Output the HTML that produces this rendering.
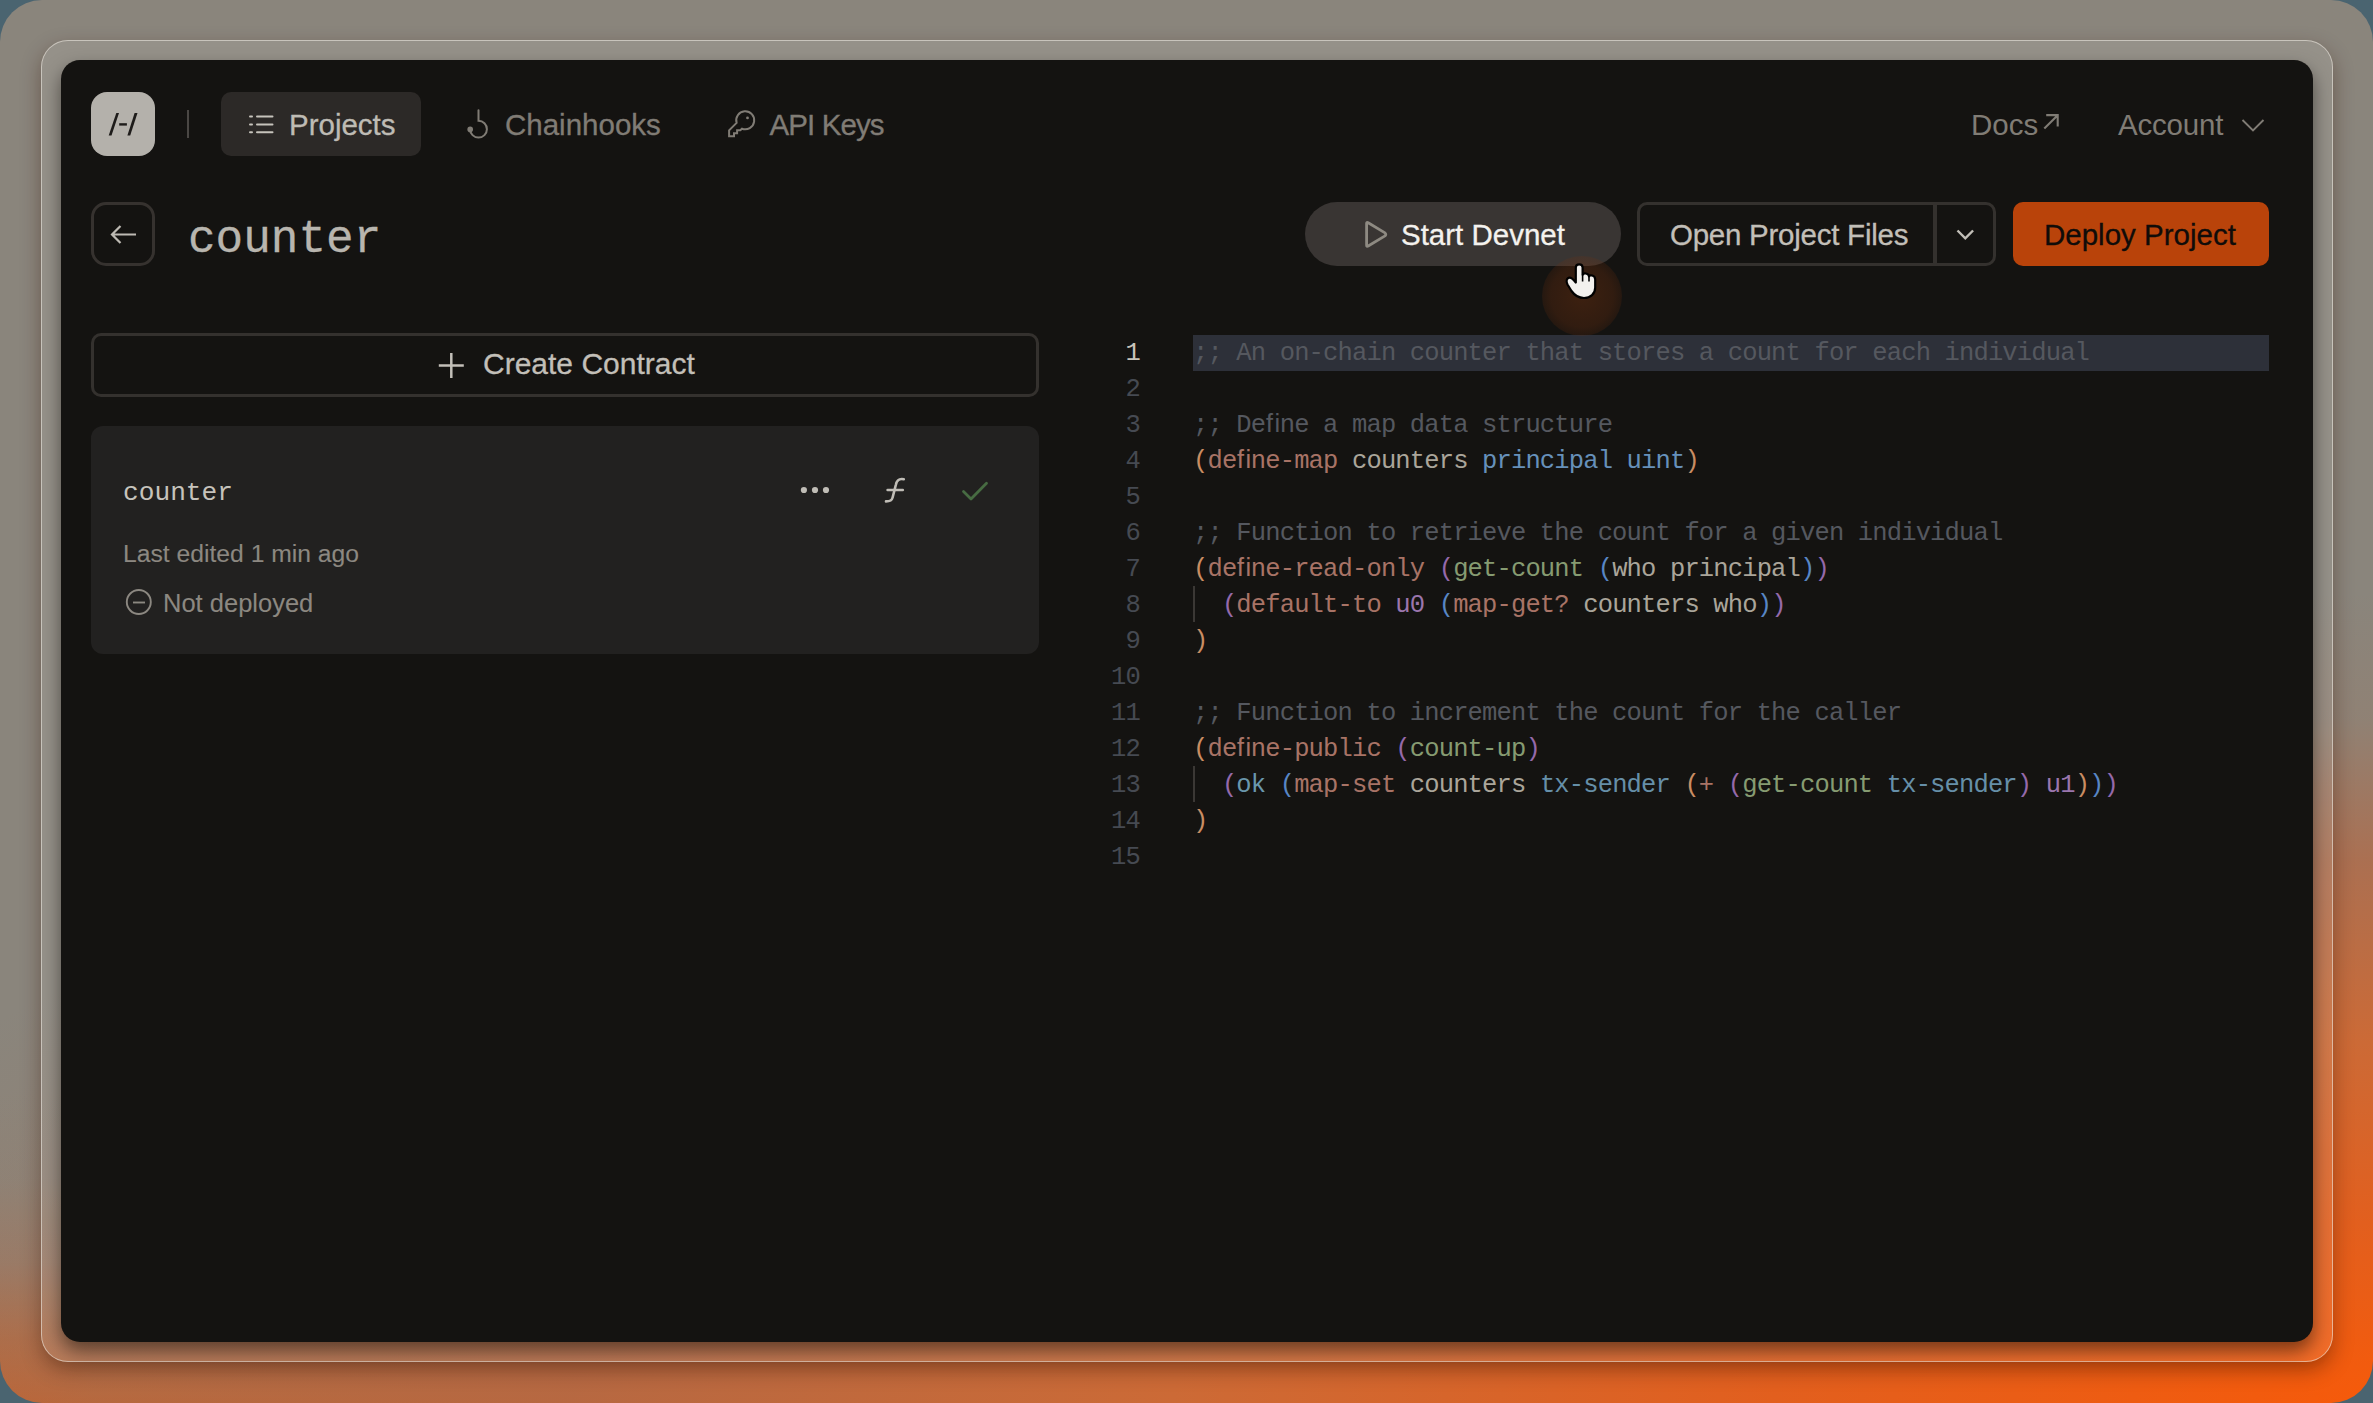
<!DOCTYPE html>
<html><head><meta charset="utf-8">
<style>
*{margin:0;padding:0;box-sizing:border-box}
html,body{width:2373px;height:1403px;overflow:hidden;background:#4a6470}
body{position:relative;font-family:"Liberation Sans",sans-serif}
.a{position:absolute}
#bg{left:0;top:0;width:2373px;height:1403px;border-radius:42px;
 background:radial-gradient(ellipse 3000px 900px at 2373px 1403px, #f65a0a 0%, #e25f1e 20%, #cc6a36 40%, rgba(180,106,70,0.8) 60%, rgba(155,122,100,0.32) 76%, rgba(138,133,124,0) 90%),
 linear-gradient(to top, rgba(196,96,44,1) 0%, rgba(184,102,58,0.88) 4.5%, rgba(168,112,82,0.5) 10%, rgba(150,124,105,0.18) 16%, rgba(138,133,124,0) 22%), #8a857c;}
#frame{left:41px;top:40px;width:2292px;height:1322px;border-radius:27px;border:1.6px solid rgba(232,228,220,0.62);
 background:rgba(255,255,255,0.10);box-shadow:0 8px 20px rgba(50,15,0,0.38)}
#app{left:61px;top:60px;width:2252px;height:1282px;border-radius:19px;background:#141311;overflow:hidden;box-shadow:0 9px 18px rgba(10,5,0,0.5)}
.t{position:absolute;white-space:nowrap;line-height:1;-webkit-text-stroke:0.3px currentColor}

.cl{position:absolute;left:0;height:36px;line-height:36px;white-space:pre;font-family:'Liberation Mono',monospace;font-size:25.5px;letter-spacing:-0.85px;color:#bdb8ad}
.ln{position:absolute;right:-101px;width:100px;text-align:right;height:36px;line-height:36px;white-space:pre;font-family:'Liberation Mono',monospace;font-size:25.5px;letter-spacing:-0.85px;color:#464a52}
#lnums{width:0}
.ln.act{color:#c8c4ba}
.c{color:#55585f}.p0{color:#c98d63}.kw{color:#a87366}.id{color:#aaa59a}.ty{color:#6690ba}.fn{color:#869b71}.p1{color:#9569aa}.p2{color:#5886c4}.nm{color:#9b76ad}.ok{color:#6a97ad}.tx{color:#668fa8}
</style></head>
<body>
<div id="bg" class="a"></div>
<div id="frame" class="a"></div>
<div id="app" class="a"></div>

<div id="ui">
<!-- nav -->
<div class="a" style="left:91px;top:92px;width:64px;height:64px;border-radius:16px;background:#b4b1ab"></div>
<div class="a" style="left:187px;top:110px;width:2px;height:28px;background:#4a4744"></div>
<div class="a" style="left:221px;top:92px;width:200px;height:64px;border-radius:10px;background:#2c2927"></div>
<div class="t" id="t_projects" style="left:289px;top:109.5px;font-size:29.5px;color:#bebbb4">Projects</div>
<div class="t" id="t_chain" style="left:505px;top:109.5px;font-size:29.5px;color:#807c75">Chainhooks</div>
<div class="t" id="t_api" style="letter-spacing:-0.9px;left:769.5px;top:109.5px;font-size:29.5px;color:#807c75">API Keys</div>
<div class="t" id="t_docs" style="-webkit-text-stroke:0;left:1971px;top:109.5px;font-size:29.5px;color:#807c75">Docs</div>
<div class="t" id="t_account" style="-webkit-text-stroke:0;letter-spacing:-0.2px;left:2118px;top:109.5px;font-size:29.5px;color:#807c75">Account</div>

<!-- header -->
<div class="a" style="left:91px;top:202px;width:64px;height:64px;border-radius:15px;border:3.5px solid #36322f"></div>
<div class="t" id="t_title" style="-webkit-text-stroke:0.3px currentColor;left:188px;top:217px;font-size:46px;font-family:'Liberation Mono',monospace;color:#b8b5ae">counter</div>

<div class="a" style="left:1305px;top:202px;width:316px;height:64px;border-radius:32px;background:#393533"></div>
<div class="t" id="t_start" style="left:1401px;top:219.5px;font-size:29.5px;color:#f4f2ee">Start Devnet</div>
<div class="a" style="left:1637px;top:202px;width:359px;height:64px;border-radius:10px;border:3.5px solid #34312e"></div>
<div class="a" style="left:1933px;top:205px;width:3.5px;height:58px;background:#34312e"></div>
<div class="t" id="t_open" style="letter-spacing:-0.25px;left:1670px;top:219.5px;font-size:29.5px;color:#c2bfb8">Open Project Files</div>
<div class="a" style="left:2013px;top:202px;width:256px;height:64px;border-radius:10px;background:#b9430a"></div>
<div class="t" id="t_deploy" style="left:2044px;top:219.5px;font-size:29.5px;color:#100c09">Deploy Project</div>

<!-- left panel -->
<div class="a" style="left:91px;top:333px;width:948px;height:64px;border-radius:10px;border:3px solid #34312e"></div>
<div class="t" id="t_create" style="left:483px;top:348.5px;font-size:30px;color:#c2bfb8">Create Contract</div>
<div class="a" style="left:91px;top:426px;width:948px;height:228px;border-radius:12px;background:#222120"></div>
<div class="t" id="t_card" style="-webkit-text-stroke:0;left:123px;top:479.5px;font-size:26.2px;font-family:'Liberation Mono',monospace;color:#c6c3bc">counter</div>
<div class="t" id="t_last" style="-webkit-text-stroke:0.1px currentColor;left:123px;top:541.5px;font-size:24.7px;color:#8c8881">Last edited 1 min ago</div>
<div class="t" id="t_notdep" style="-webkit-text-stroke:0.1px currentColor;left:163px;top:591px;font-size:25.5px;color:#8c8881">Not deployed</div>

<!-- code -->
<div class="a" style="left:1193px;top:335px;width:1076px;height:36px;background:#2d3039"></div>
<div class="a" style="left:1193px;top:586px;width:2px;height:36px;background:#3b3835"></div>
<div class="a" style="left:1193px;top:766px;width:2px;height:36px;background:#3b3835"></div>
<div id="code" class="a" style="left:1193px;top:336px"><div class="cl" style="top:0px"><span class="c">;; An on-chain counter that stores a count for each individual</span></div><div class="cl" style="top:36px"></div><div class="cl" style="top:72px"><span class="c">;; Deﬁne a map data structure</span></div><div class="cl" style="top:108px"><span class="p0">(</span><span class="kw">deﬁne-map</span> <span class="id">counters</span> <span class="ty">principal</span> <span class="ty">uint</span><span class="p0">)</span></div><div class="cl" style="top:144px"></div><div class="cl" style="top:180px"><span class="c">;; Function to retrieve the count for a given individual</span></div><div class="cl" style="top:216px"><span class="p0">(</span><span class="kw">deﬁne-read-only</span> <span class="p1">(</span><span class="fn">get-count</span> <span class="p2">(</span><span class="id">who principal</span><span class="p2">)</span><span class="p1">)</span></div><div class="cl" style="top:252px">  <span class="p1">(</span><span class="kw">default-to</span> <span class="nm">u0</span> <span class="p2">(</span><span class="kw">map-get?</span> <span class="id">counters who</span><span class="p2">)</span><span class="p1">)</span></div><div class="cl" style="top:288px"><span class="p0">)</span></div><div class="cl" style="top:324px"></div><div class="cl" style="top:360px"><span class="c">;; Function to increment the count for the caller</span></div><div class="cl" style="top:396px"><span class="p0">(</span><span class="kw">deﬁne-public</span> <span class="p1">(</span><span class="fn">count-up</span><span class="p1">)</span></div><div class="cl" style="top:432px">  <span class="p1">(</span><span class="ok">ok</span> <span class="p2">(</span><span class="kw">map-set</span> <span class="id">counters</span> <span class="tx">tx-sender</span> <span class="p0">(</span><span class="kw">+</span> <span class="p1">(</span><span class="fn">get-count</span> <span class="tx">tx-sender</span><span class="p1">)</span> <span class="nm">u1</span><span class="p0">)</span><span class="p2">)</span><span class="p1">)</span></div><div class="cl" style="top:468px"><span class="p0">)</span></div><div class="cl" style="top:504px"></div></div>
<div id="lnums" class="a" style="left:1039px;top:336px"><div class="ln act" style="top:0px">1</div><div class="ln" style="top:36px">2</div><div class="ln" style="top:72px">3</div><div class="ln" style="top:108px">4</div><div class="ln" style="top:144px">5</div><div class="ln" style="top:180px">6</div><div class="ln" style="top:216px">7</div><div class="ln" style="top:252px">8</div><div class="ln" style="top:288px">9</div><div class="ln" style="top:324px">10</div><div class="ln" style="top:360px">11</div><div class="ln" style="top:396px">12</div><div class="ln" style="top:432px">13</div><div class="ln" style="top:468px">14</div><div class="ln" style="top:504px">15</div></div>

<svg class="a" style="left:0;top:0" width="2373" height="1403" viewBox="0 0 2373 1403" fill="none">
 <!-- logo glyph -->
 <g fill="#1e1c1a">
  <polygon points="116.3,113 119,113 111.5,135.5 108.7,135.5"/>
  <rect x="119.2" y="123.2" width="7.7" height="2.4"/>
  <polygon points="134.6,113 137.5,113 130.2,135.5 127.4,135.5"/>
 </g>
 <!-- list icon -->
 <g stroke="#c6c3bc" stroke-width="2" stroke-linecap="round">
  <line x1="250" y1="116.5" x2="252" y2="116.5"/><line x1="257" y1="116.5" x2="272.5" y2="116.5"/>
  <line x1="250" y1="124.4" x2="252" y2="124.4"/><line x1="257" y1="124.4" x2="272.5" y2="124.4"/>
  <line x1="250" y1="132.3" x2="252" y2="132.3"/><line x1="257" y1="132.3" x2="272.5" y2="132.3"/>
 </g>
 <!-- chainhooks icon -->
 <g stroke="#807c75" stroke-width="2" stroke-linecap="round" fill="none">
  <path d="M478.5 110.3 V120.8 A8.4 8.4 0 1 1 470.1 129.2"/>
 </g>
 <circle cx="470.2" cy="129.4" r="2.8" fill="#807c75"/>
 <!-- key icon -->
 <g stroke="#807c75" stroke-width="2" stroke-linejoin="miter" fill="none">
  <path d="M736.6 122.9 L729.1 130.4 V136.3 H734 V133.2 H737.1 V130.3 H740.3 L742 128.7 A9 9 0 1 0 736.6 122.9 Z"/>
 </g>
 <circle cx="747.5" cy="117.9" r="1.4" fill="#807c75"/>
 <!-- docs arrow -->
 <g stroke="#807c75" stroke-width="2.1" stroke-linecap="butt" fill="none">
  <path d="M2044.3 128.6 L2057.2 115.7 M2046.2 115.1 H2057.7 V126.6"/>
 </g>
 <!-- account chevron -->
 <path d="M2242.5 120 L2253 130.5 L2263.5 120" stroke="#807c75" stroke-width="1.9" fill="none"/>
 <!-- back arrow -->
 <g stroke="#bdbab3" stroke-width="2.2" fill="none">
  <path d="M136 234.5 H112 M120.5 226 L112 234.5 L120.5 243"/>
 </g>
 <!-- play icon -->
 <path d="M1366.6 223.6 Q1366.6 221.9 1368.2 222.8 L1385 232.9 Q1386.6 234.4 1385 235.9 L1368.2 246 Q1366.6 246.9 1366.6 245.2 Z" stroke="#8e8a82" stroke-width="2.8" stroke-linejoin="round" fill="none"/>
 <!-- chevron open -->
 <path d="M1957.5 230.5 L1965.3 238.3 L1973.1 230.5" stroke="#c2bfb8" stroke-width="2.4" fill="none"/>
 <!-- plus -->
 <g stroke="#c2bfb8" stroke-width="2.5"><path d="M451.3 353 V378 M438.8 365.5 H463.8"/></g>
 <!-- dots -->
 <g fill="#c0bdb6"><circle cx="803.9" cy="490" r="3.1"/><circle cx="815" cy="490" r="3.1"/><circle cx="826" cy="490" r="3.1"/></g>
 <!-- function icon -->
 <g stroke="#c0bdb6" stroke-width="2.6" stroke-linecap="round" fill="none">
  <path d="M903.8 479.2 C899 478.3 896.8 480 895.8 485 L892.6 497.5 C891.8 500.8 890 501.4 886 501.4"/>
  <path d="M887.6 490 H902.8"/>
 </g>
 <!-- check -->
 <path d="M963.5 491.5 L971 499 L986.5 483.3" stroke="#476b42" stroke-width="2.8" stroke-linecap="round" stroke-linejoin="round" fill="none"/>
 <!-- not deployed icon -->
 <circle cx="138.8" cy="602" r="12" stroke="#8c8881" stroke-width="1.9" fill="none"/>
 <path d="M133 602.5 H145" stroke="#8c8881" stroke-width="1.9"/>
</svg>
</div>

<div class="a" style="left:1542px;top:256px;width:80px;height:80px;border-radius:50%;background:radial-gradient(circle at 50% 50%, rgba(140,58,14,0.34) 0%, rgba(125,52,14,0.28) 55%, rgba(100,42,12,0.12) 80%, rgba(60,30,10,0) 100%)"></div>
<svg class="a" style="left:0;top:0" width="2373" height="1403" viewBox="0 0 2373 1403">
 <path d="M1575.8 282.5 L1575.8 267.5 C1575.8 263.3 1582.6 263.3 1582.6 267.5 L1582.6 274.8 C1583 272.8 1588.8 272.8 1589 276.5 C1589.5 274.4 1595.2 274.8 1595.2 279.5 L1595.2 287.5 C1595.2 294 1590.5 298 1584 298 C1578 298 1575 296 1571.5 291 L1567.5 284.5 C1565.8 281.5 1566.5 277.8 1569.5 277.6 C1571.3 277.5 1573 279 1575.8 282.5 Z" fill="#f3f1ee" stroke="#000" stroke-width="2.2" stroke-linejoin="round"/>
 <path d="M1582.6 274.8 V281.5 M1589 276.5 V281.5" stroke="#000" stroke-width="1.6"/>
</svg>
</body></html>
